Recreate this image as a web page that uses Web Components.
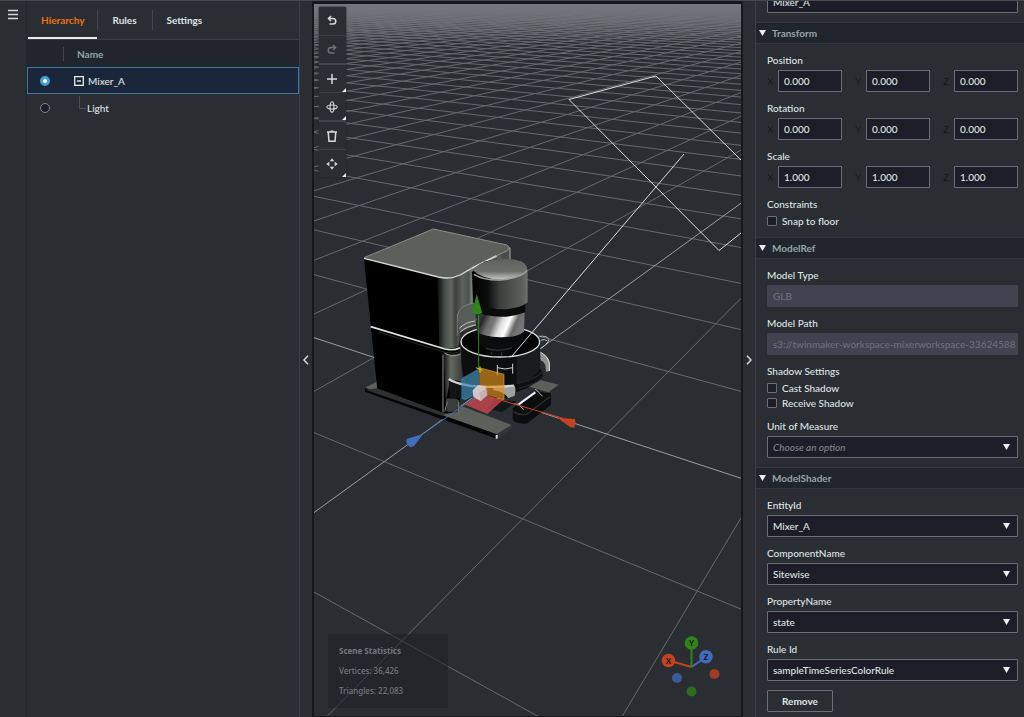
<!DOCTYPE html>
<html lang="en">
<head>
<meta charset="utf-8">
<meta name="viewport" content="width=device-width, initial-scale=1">
<title>Scene Composer</title>
<style>
  html, body { margin: 0; height: 100%; background: #2a2e33; }
  body {
    font: 500 10px/14px Lato, "Noto Sans", sans-serif;
    color: #dfe4e4;
    --panel: #2a2e33;
    --header: #21252c;
    --field: #1c1d29;
    --line: #3a3e46;
    --field-line: #687078;
    --muted: #95a5a6;
  }
</style>
</head>
<body>
<scene-composer>
  <nav-rail slot="rail"></nav-rail>
  <hierarchy-panel slot="left"></hierarchy-panel>
  <panel-toggle slot="left-toggle" direction="left"></panel-toggle>
  <scene-view slot="scene"></scene-view>
  <panel-toggle slot="right-toggle" direction="right"></panel-toggle>
  <property-panel slot="right">
    <prop-section>
      <text-field name="Name" hide-label value="Mixer_A"></text-field>
    </prop-section>
    <prop-section heading="Transform">
      <vector-field label="Position" value="0.000"></vector-field>
      <vector-field label="Rotation" value="0.000"></vector-field>
      <vector-field label="Scale" value="1.000"></vector-field>
      <check-group label="Constraints" options="Snap to floor"></check-group>
    </prop-section>
    <prop-section heading="ModelRef">
      <text-field label="Model Type" value="GLB" disabled></text-field>
      <text-field label="Model Path" value="s3://twinmaker-workspace-mixerworkspace-33624588" disabled></text-field>
      <check-group label="Shadow Settings" options="Cast Shadow|Receive Shadow"></check-group>
      <select-field label="Unit of Measure" placeholder value="Choose an option"></select-field>
    </prop-section>
    <prop-section heading="ModelShader">
      <select-field label="EntityId" value="Mixer_A"></select-field>
      <select-field label="ComponentName" value="Sitewise"></select-field>
      <select-field label="PropertyName" value="state"></select-field>
      <select-field label="Rule Id" value="sampleTimeSeriesColorRule"></select-field>
      <action-button>Remove</action-button>
    </prop-section>
  </property-panel>
</scene-composer>

<script>
class BaseElement extends HTMLElement {
  connectedCallback() {
    if (this.shadowRoot) return;
    this.attachShadow({ mode: "open" }).innerHTML =
      `<style>*{box-sizing:border-box} button,input,select{font:inherit;color:inherit;margin:0}</style>` + this.view();
  }
  attr(name) { return this.getAttribute(name) || ""; }
}
const define = (name, view) =>
  customElements.define(name, class extends BaseElement { view() { return view.call(this, this); } });

define("scene-composer", () => `
  <style>
    :host { display: grid; grid-template-columns: 27px 273px 12px minmax(0, 1fr) 12px 269px;
      height: 100vh; overflow: hidden; border-top: 1px solid #454951; box-sizing: border-box; background: var(--panel); }
    ::slotted(*) { min-height: 0; }
  </style>
  <slot name="rail"></slot><slot name="left"></slot><slot name="left-toggle"></slot>
  <slot name="scene"></slot><slot name="right-toggle"></slot><slot name="right"></slot>`);

define("nav-rail", () => `
  <style>
    :host { display: block; padding: 8px 0 0 8px; border-right: 1px solid #23262b; box-sizing: border-box; }
    button { display: block; padding: 0; border: 0; background: none; }
    svg { display: block; }
  </style>
  <button aria-label="Menu"><svg width="10" height="11" viewBox="0 0 10 11"><path d="M0 1.5h10M0 5.5h10M0 9.5h10" stroke="#d5dbdb" stroke-width="1.5"/></svg></button>`);

define("panel-toggle", el => `
  <style>
    :host { display: grid; place-items: center; padding-top: 2px; }
    button { display: block; padding: 0; border: 0; background: none; }
    svg { display: block; }
  </style>
  <button aria-label="Collapse ${el.attr("direction")} panel"><svg width="6" height="10" viewBox="0 0 6 10" fill="none" stroke="#d5dbdb" stroke-width="1.5">
    <path d="${el.attr("direction") === "left" ? "M5 .8 1 5l4 4.2" : "M1 .8 5 5 1 9.2"}"/></svg></button>`);

define("hierarchy-panel", () => `
  <style>
    :host { display: block; border-right: 1px solid var(--line); box-sizing: border-box; }
    nav { display: flex; height: 39px; border-bottom: 1px solid var(--line); font-weight: 700; padding-left: 1px; }
    nav button { position: relative; border: 0; background: none; padding: 0 15px; font: inherit; line-height: 36px; }
    nav button + button::before { content: ""; position: absolute; left: 0; top: 9px; height: 20px; border-left: 1px solid #41454d; }
    nav button[aria-selected="true"] { color: #ec7211; padding: 0 13px; }
    nav button[aria-selected="true"]::after { content: ""; position: absolute; left: 0; right: 0; bottom: 0; height: 2px; background: #eaeded; }
    table { width: 100%; border-collapse: collapse; table-layout: fixed; }
    th, td { padding: 0; height: 27px; text-align: left; font-weight: 500; }
    thead th { background: var(--header); color: var(--muted); font-weight: 700; }
    th:first-child { width: 37px; }
    th i { display: block; height: 14px; border-right: 1px solid #41454d; }
    thead th + th { padding-left: 13px; }
    tr.on { background: #1b263b; outline: 1px solid #3f779d; outline-offset: -1px; }
    td input { appearance: none; display: block; width: 10px; height: 10px; margin-left: 13px; border: 1px solid #7d858b; border-radius: 50%; background: var(--field); }
    td input:checked { border: 3px solid #44a0d4; background: #fff; }
    .node { display: flex; align-items: center; gap: 4px; padding-left: 10px; }
    .node button { padding: 0; border: 0; background: none; }
    svg { display: block; overflow: visible; }
    .leaf { gap: 1px; padding-left: 14px; }
  </style>
  <nav role="tablist"><button role="tab" aria-selected="true">Hierarchy</button><button role="tab">Rules</button><button role="tab">Settings</button></nav>
  <table>
    <thead><tr><th><i></i></th><th>Name</th></tr></thead>
    <tbody>
      <tr class="on"><td><input type="radio" name="n" aria-label="Select Mixer_A" checked></td>
        <td><div class="node"><button aria-label="Collapse"><svg width="10" height="10" viewBox="0 0 10 10" fill="none" stroke="#eaeded"><path d="M.7.7h8.6v8.6H.7z" stroke-width="1.3"/><path d="M3 5h4" stroke-width="1.4"/></svg></button><span>Mixer_A</span></div></td></tr>
      <tr><td><input type="radio" name="n" aria-label="Select Light"></td>
        <td><div class="node leaf"><svg width="8" height="20" viewBox="0 0 8 20"><path d="M1.500-2V10.500H8" fill="none" stroke="#4b505a"/></svg><span>Light</span></div></td></tr>
    </tbody>
  </table>`);

/* Ground plane in perspective: grid cell (i, j) to a point of the drawing. */
function groundGrid() {
  const G = -0.0892, H = -0.1387, K = 100;
  const at = (i, j) => {
    const d = 1 + G * i + H * j;
    return ((480 + 72.58 * i - 149 * j) / d).toFixed(1) + " " + ((392.3 + 3 * i + 5.3 * j) / d).toFixed(1);
  };
  let minor = "", axes = "";
  for (let n = -K; n <= K; n++) {
    const jMax = Math.min(K, (0.85 + G * n) / -H), iMax = Math.min(K, (0.85 + H * n) / -G);
    let d = "";
    if (jMax > -K) d += `M${at(n, -K)}L${at(n, jMax)}`;
    if (iMax > -K) d += `M${at(-K, n)}L${at(iMax, n)}`;
    if (n === 0) axes += d; else minor += d;
  }
  return `<path d="${minor}" stroke="#66686e"/><path d="${axes}" stroke="#9c9da1"/>`;
}

/* The mixer, drawn at three times its size on the canvas. */
const mixer = `
<g transform="translate(350 215) scale(.33333)" fill="none" stroke-linejoin="round">
  <path d="M45 518 85 497 300 560 485 630 440 658Z" fill="#5b605b"/>
  <path d="M560 492 626 509 595 532 520 510Z" fill="#5b605b"/>
  <path d="M45 519 440 658V671L45 530Z" fill="#050505"/>
  <path d="M440 658 485 630V640L440 671Z" fill="#33363a"/>
  <path d="M437 660h6v11h-6z" fill="#dfe2df"/>
  <path d="M42 132 265 186 300 190 330 400 330 560 325 590 286 596 82 524Z" fill="#000"/>
  <path d="M45 524 82 520 286 596 280 604Z" fill="#2e312f"/>
  <path d="M262 186Q300 194 330 180L480 98V140L372 200 378 330 330 352 326 395Q300 406 268 398Z" fill="url(#side)"/>
  <path d="M450 118 480 98V142L455 135Z" fill="#474c48"/>
  <path d="M365 168 376 262 372 330 330 348 322 300Q330 272 368 264Z" fill="#565c57"/>
  <path d="M322 362V300Q330 270 372 264" stroke="#8d938d" stroke-width="2"/>
  <path d="M328 340Q345 322 376 318M330 352Q348 334 378 330" stroke="#c5c9c5" stroke-width="3"/>
  <path d="M42 129 250 42 470 90Q484 96 478 104L330 182Q300 194 265 187Z" fill="#5b605a"/>
  <path d="M42 130 265 186Q302 194 330 180L365 160" stroke="#d4d8d4" stroke-width="4"/>
  <path d="M365 160 440 122" stroke="#d4d8d4" stroke-width="5"/>
  <path d="M440 122 470 108Q484 98 470 90L250 42 42 128" stroke="#8b918b" stroke-width="3"/>
  <path d="M480 98V138" stroke="#a9aea9" stroke-width="3"/>
  <path d="M62 335 285 402Q310 408 330 398" stroke="#dfe2df" stroke-width="5"/>
  <path d="M88 352 285 412Q310 418 332 410" stroke="#3a3d3a" stroke-width="2"/>
  <path d="M280 415Q305 424 332 414L336 500 300 492 288 560Z" fill="url(#low)"/>
  <path d="M283 414Q305 428 332 418M279 418V592" stroke="#8d928d" stroke-width="3"/>
  <path d="M288 552Q310 545 328 556V590H290Z" fill="#3b3f3c"/>
  <path d="M284 590 292 560M326 592V560" stroke="#7e837e" stroke-width="3"/>
  <path d="M488 580 560 530 603 535V570L530 626Q490 628 488 610Z" fill="#0c0d0e"/>
  <path d="M490 590Q510 602 530 598L600 545" stroke="#2c2e31" stroke-width="4"/>
  <path d="M410 580 435 552 500 560 455 592Z" fill="#141517"/>
  <path d="M506 568 556 532" stroke="#f4f4f4" stroke-width="6"/>
  <path d="M502 566 522 584M556 522 578 544" stroke="#b4b7b6" stroke-width="3"/>
  <path d="M334 380C334 450 336 470 345 500Q440 560 530 520L578 490V470L570 460V380Z" fill="#0d0e0f"/>
  <path d="M500 420 570 390V460Q560 490 500 505Z" fill="#1b1c1e"/>
  <path d="M500 505Q555 495 578 470M505 520Q560 508 580 485" stroke="#28292b" stroke-width="4"/>
  <path d="M570 412Q596 425 598 445V468L588 470Q588 440 572 436Z" fill="#8d938f"/>
  <path d="M572 412Q596 425 598 445V468" stroke="#f0f2f0" stroke-width="3"/>
  <path d="M568 364Q590 362 594 370 604 376 574 400M572 376Q584 370 592 378" stroke="#b8bcb9" stroke-width="3"/>
  <ellipse cx="451" cy="380" rx="118" ry="46" fill="#050505" stroke="#dcdedc" stroke-width="4"/>
  <path d="M378 350 522 345V378Q505 398 480 400L478 420H420L415 402Q382 392 378 372Z" fill="#0b0c0d"/>
  <path d="M408 400Q450 412 486 398M425 412V420M455 412V424" stroke="#2e3032" stroke-width="4"/>
  <path d="M382 290 524 285 522 350Q500 368 450 367 400 364 380 350Z" fill="url(#chrome)"/>
  <path d="M376 270 526 268V292Q490 306 450 305 400 302 378 290Z" fill="#0a0b0b"/>
  <path d="M366 172Q385 140 430 134 480 128 515 140 532 150 533 168V262Q505 284 445 283 400 278 370 264Z" fill="url(#head)"/>
  <path d="M368 166Q385 142 430 134 480 128 515 140 534 150 530 168 510 190 450 194 395 192 368 166Z" fill="url(#cap)"/>
  <path d="M372 178Q400 196 450 195 515 190 531 166" stroke="#9ea39e" stroke-width="4"/>
  <path d="M442 450V480M488 446V476M442 458Q465 466 488 458" stroke="#cfd2d0" stroke-width="3"/>
  <path d="M296 490Q350 520 492 510 498 518 495 540L480 550Q440 548 390 548 340 545 300 552Z" fill="#131415"/>
  <path d="M430 514 492 510Q500 518 494 542L475 550Q465 530 430 526Z" fill="#9da29e"/>
  <path d="M296 492Q350 525 492 512" stroke="#cfd3cf" stroke-width="7"/>
  <path d="M334 490 388 460V535L344 556 334 550Z" fill="#3f89b2" fill-opacity=".72"/>
  <path d="M388 458 462 478V554L388 535Z" fill="#e0921d" fill-opacity=".66"/>
  <path d="M388 458 462 478V552" stroke="#e39a26" stroke-width="2"/>
  <path d="M392 535 458 556 412 597 342 568Z" fill="#d64a52" fill-opacity=".75"/>
  <path d="M386 470V300" stroke="#2f8a17" stroke-width="3"/>
  <path d="M380 237 397 294Q382 302 366 294Z" fill="#2e8418"/>
  <path d="M378 458 398 466M390 454V474" stroke="#d8c62c" stroke-width="3"/>
  <path d="M392 538 640 610" stroke="#c9431f" stroke-width="3"/>
  <path d="M622 608 674 612Q680 622 672 638L660 636Z" fill="#c3431f"/>
  <path d="M388 538 215 660" stroke="#3c66b4" stroke-width="3"/>
  <path d="M220 656 170 672Q166 688 182 697L192 694Z" fill="#416cba"/>
  <path d="M368 526 384 510 406 514 412 540 392 558 370 546Z" fill="#d9cfcf" fill-opacity=".92"/>
  <path d="M388 534 412 518V542L392 558Z" fill="#b9a3a1" fill-opacity=".6"/>
</g>`;

const toolIcons = {
  Undo: `<path d="M3 3.500H7a2.700 2.700 0 0 1 0 5.500H3.500" /><path d="M5 1 2.500 3.500 5 6" />`,
  Redo: `<path d="M9 3.500H5A2.700 2.700 0 0 0 5 9H8.500" /><path d="M7 1 9.500 3.500 7 6" />`,
  Add: `<path d="M6 1v10M1 6h10"/>`,
  Orbit: `<g stroke-width="1.100"><ellipse cx="6" cy="6" rx="2" ry="5.200"/><ellipse cx="6" cy="6" rx="5.200" ry="2"/></g>`,
  Delete: `<path d="M1 2h10M4.500 1.200h3"/><path d="M2.200 2 3 11.200H9L9.800 2"/>`,
  Move: `<g fill="#d5dbdb" stroke="none"><path d="M6 .3 8.200 3.300H3.800zM6 11.700 3.800 8.700h4.400zM.3 6l3-2.200v4.400zM11.700 6l-3 2.200V3.800z"/></g>`
};
define("tool-button", el => `
  <style>
    :host { display: block; }
    button { position: relative; display: grid; place-items: center; width: 27px; height: 28px; padding: 0 1px 0 0; border: 0; background: var(--panel); }
    :host([group]) button { border-top: 2px solid #414550; height: 29px; }
    :host([line]) button { border-top: 1px solid #3c4047; }
    svg { display: block; }
    :host([dim]) svg { opacity: .4; }
    :host([menu]) button::after { content: ""; position: absolute; right: 0; bottom: 0; border: 2px solid; border-color: transparent #eaeded #eaeded transparent; }
  </style>
  <button aria-label="${el.attr("name")}"><svg width="12" height="12" viewBox="0 0 12 12" fill="none" stroke="#d5dbdb" stroke-width="1.5">${toolIcons[el.attr("name")]}</svg></button>`);

define("scene-view", () => `
  <style>
    :host { display: block; position: relative; border: 2px solid #16181d; border-top-width: 3px; border-bottom-width: 1px; box-sizing: border-box; background: var(--panel); overflow: hidden; }
    .canvas { display: block; width: 100%; height: 100%; }
    .tools { position: absolute; left: 5px; top: 3px; box-shadow: 0 0 2px #1d1f24; }
    .stats { position: absolute; left: 14px; bottom: 8px; width: 120px; padding: 10px 11px 10px; background: rgba(29,32,36,.55);
      font: 500 8px/14px "Noto Sans", "Open Sans", sans-serif; color: #74777c; display: grid; gap: 6px; }
    .stats p, .stats h2 { margin: 0; font-size: 8px; }
    .stats h2 { font-weight: 700; }
    .compass { position: absolute; right: 18px; bottom: 18px; }
  </style>
  <svg class="canvas" viewBox="314 4 427 712" preserveAspectRatio="xMidYMid slice" role="img" aria-label="3D scene">
    <defs>
      <linearGradient id="side" gradientUnits="userSpaceOnUse" x1="258" y1="0" x2="372" y2="0"><stop offset="0" stop-color="#000"/><stop offset=".25" stop-color="#4d534e"/><stop offset=".4" stop-color="#606660"/><stop offset=".52" stop-color="#3c413d"/><stop offset=".7" stop-color="#5d635d"/><stop offset=".86" stop-color="#4d524e"/><stop offset=".94" stop-color="#7a807b"/><stop offset="1" stop-color="#565b56"/></linearGradient>
      <linearGradient id="low" gradientUnits="userSpaceOnUse" x1="280" y1="0" x2="336" y2="0"><stop offset="0" stop-color="#111"/><stop offset=".4" stop-color="#626862"/><stop offset="1" stop-color="#3b3f3c"/></linearGradient>
      <linearGradient id="head"><stop offset="0" stop-color="#000"/><stop offset=".28" stop-color="#0b0c0b"/><stop offset=".5" stop-color="#3b403c"/><stop offset=".9" stop-color="#5a605a"/><stop offset="1" stop-color="#6c726c"/></linearGradient>
      <linearGradient id="cap" x2="0" y2="1"><stop offset="0" stop-color="#5c625c"/><stop offset=".6" stop-color="#6a706a"/><stop offset="1" stop-color="#c4c9c4"/></linearGradient>
      <linearGradient id="chrome" x2="1" y2=".25"><stop offset="0" stop-color="#1c1c1c"/><stop offset=".12" stop-color="#3a3a3a"/><stop offset=".2" stop-color="#262626"/><stop offset=".34" stop-color="#6a6a6a"/><stop offset=".44" stop-color="#777"/><stop offset=".6" stop-color="#ddd"/><stop offset=".74" stop-color="#fff"/><stop offset=".88" stop-color="#666"/><stop offset="1" stop-color="#777"/></linearGradient>
      <linearGradient id="haze" x2="0" y2="1"><stop offset="0" stop-color="#75777d"/><stop offset="1" stop-color="#75777d" stop-opacity="0"/></linearGradient>
    </defs>
    ${groundGrid()}
    <path d="M314 4h427v40H314z" fill="url(#haze)"/>
    ${mixer}
    <path d="M741 160 656 76 569 99.500 719 250.500 741 233M684 154 512 356" fill="none" stroke="#dcdcdd"/>
  </svg>
  <div class="stats"><h2>Scene Statistics</h2><p>Vertices: 36,426</p><p>Triangles: 22,083</p></div>
  <svg class="compass" width="64" height="64" viewBox="659 634 64 64" font-size="8" font-weight="700" text-anchor="middle">
    <g stroke-width="2"><path d="M691.500 667 668.500 660.500" stroke="#c3431f"/><path d="M691.500 667 706 657" stroke="#416cba"/><path d="M691.500 667V643" stroke="#2e8418"/></g>
    <circle cx="668.500" cy="660.500" r="6.800" fill="#c3431f"/><circle cx="691.500" cy="643" r="6.800" fill="#2e8418"/><circle cx="706" cy="656.800" r="6.800" fill="#416cba"/>
    <circle cx="714.500" cy="674" r="5" fill="#9e3c26"/><circle cx="677" cy="678" r="5" fill="#3a5b99"/><circle cx="691.500" cy="691.500" r="5" fill="#2b6c1d"/>
    <g fill="#101216"><text x="668.500" y="664">X</text><text x="691.500" y="646">Y</text><text x="706" y="660">Z</text></g>
  </svg>
  <div class="tools">
    <tool-button name="Undo"></tool-button><tool-button name="Redo" line dim></tool-button>
    <tool-button name="Add" group menu></tool-button><tool-button name="Orbit" line menu></tool-button>
    <tool-button name="Delete" group></tool-button><tool-button name="Move" line menu></tool-button>
  </div>`);

define("property-panel", () => `
  <style>
    :host { display: block; border-left: 1px solid var(--line); box-sizing: border-box; overflow: hidden; }
    div { margin-top: -19px; }
  </style><div><slot></slot></div>`);

define("prop-section", el => `
  <style>
    :host { display: block; }
    h3 { display: flex; align-items: center; gap: 6px; height: 22px; margin: 0; padding-left: 3px; background: var(--header);
      border-top: 1px solid #33363f; border-bottom: 1px solid #33363f; font: inherit; font-weight: 700; color: var(--muted); }
    .body { display: grid; gap: 9px; padding: 9px 6px 9px 11px; }
  </style>
  ${el.attr("heading") ? `<h3><svg width="7" height="6" viewBox="0 0 7 6"><path d="M0 0h7L3.500 6z" fill="#eaeded"/></svg>${el.attr("heading")}</h3>` : ""}
  <div class="body"><slot></slot></div>`);

const fieldStyle = `
    :host { display: grid; gap: 3px; }
    label, legend { display: block; height: 14px; padding: 0; }
    input[type="text"], select { display: block; width: 100%; height: 22px; padding: 0 0 0 5px; border: 1px solid var(--field-line); border-radius: 1px; background: var(--field); }
    input[type="text"]:disabled { background: #414450; border-color: #414450; color: #6a6f79; }`;

define("text-field", el => `
  <style>${fieldStyle}</style>
  ${el.hasAttribute("hide-label") ? "" : `<label for="f">${el.attr("label")}</label>`}
  <input type="text" id="f" value="${el.attr("value")}" ${el.hasAttribute("disabled") ? "disabled" : ""} ${el.attr("name") ? `aria-label="${el.attr("name")}"` : ""}>`);

define("vector-field", el => `
  <style>${fieldStyle}
    fieldset { display: contents; }
    .row { display: grid; grid-template-columns: repeat(3, minmax(0, 1fr)); gap: 13px; }
    .row div { display: grid; grid-template-columns: 11px minmax(0, 1fr); align-items: center; }
    .row label { color: #191b20; font-weight: 400; }
  </style>
  <fieldset><legend>${el.attr("label")}</legend>
  <div class="row">${["X", "Y", "Z"].map(a => `<div><label for="${a}">${a}</label><input type="text" id="${a}" value="${el.attr("value")}"></div>`).join("")}</div></fieldset>`);

define("check-group", el => `
  <style>${fieldStyle}
    fieldset { display: contents; }
    .list { display: grid; gap: 1px; }
    .list label { display: flex; align-items: center; gap: 5px; }
    .list input { appearance: none; width: 10px; height: 10px; border: 1px solid var(--field-line); border-radius: 1px; background: var(--field); }
  </style>
  <fieldset><legend>${el.attr("label")}</legend>
  <div class="list">${el.attr("options").split("|").map(o => `<label><input type="checkbox">${o}</label>`).join("")}</div></fieldset>`);

define("select-field", el => `
  <style>${fieldStyle}
    .box { display: grid; align-items: center; }
    .box > * { grid-area: 1 / 1; }
    select { appearance: none; }
    :host([placeholder]) select { font-style: italic; color: #7d838b; }
    svg { justify-self: end; margin-right: 8px; pointer-events: none; }
  </style>
  <label for="s">${el.attr("label")}</label>
  <div class="box"><select id="s"><option>${el.attr("value")}</option></select>
  <svg width="7" height="6" viewBox="0 0 7 6"><path d="M0 0h7L3.500 6z" fill="#eaeded"/></svg></div>`);

define("action-button", () => `
  <style>
    :host { display: block; }
    button { display: block; height: 22px; padding: 0 14px; border: 1px solid var(--field-line); border-radius: 1px; background: none; font-weight: 700; }
  </style><button><slot></slot></button>`);
</script>
</body>
</html>
